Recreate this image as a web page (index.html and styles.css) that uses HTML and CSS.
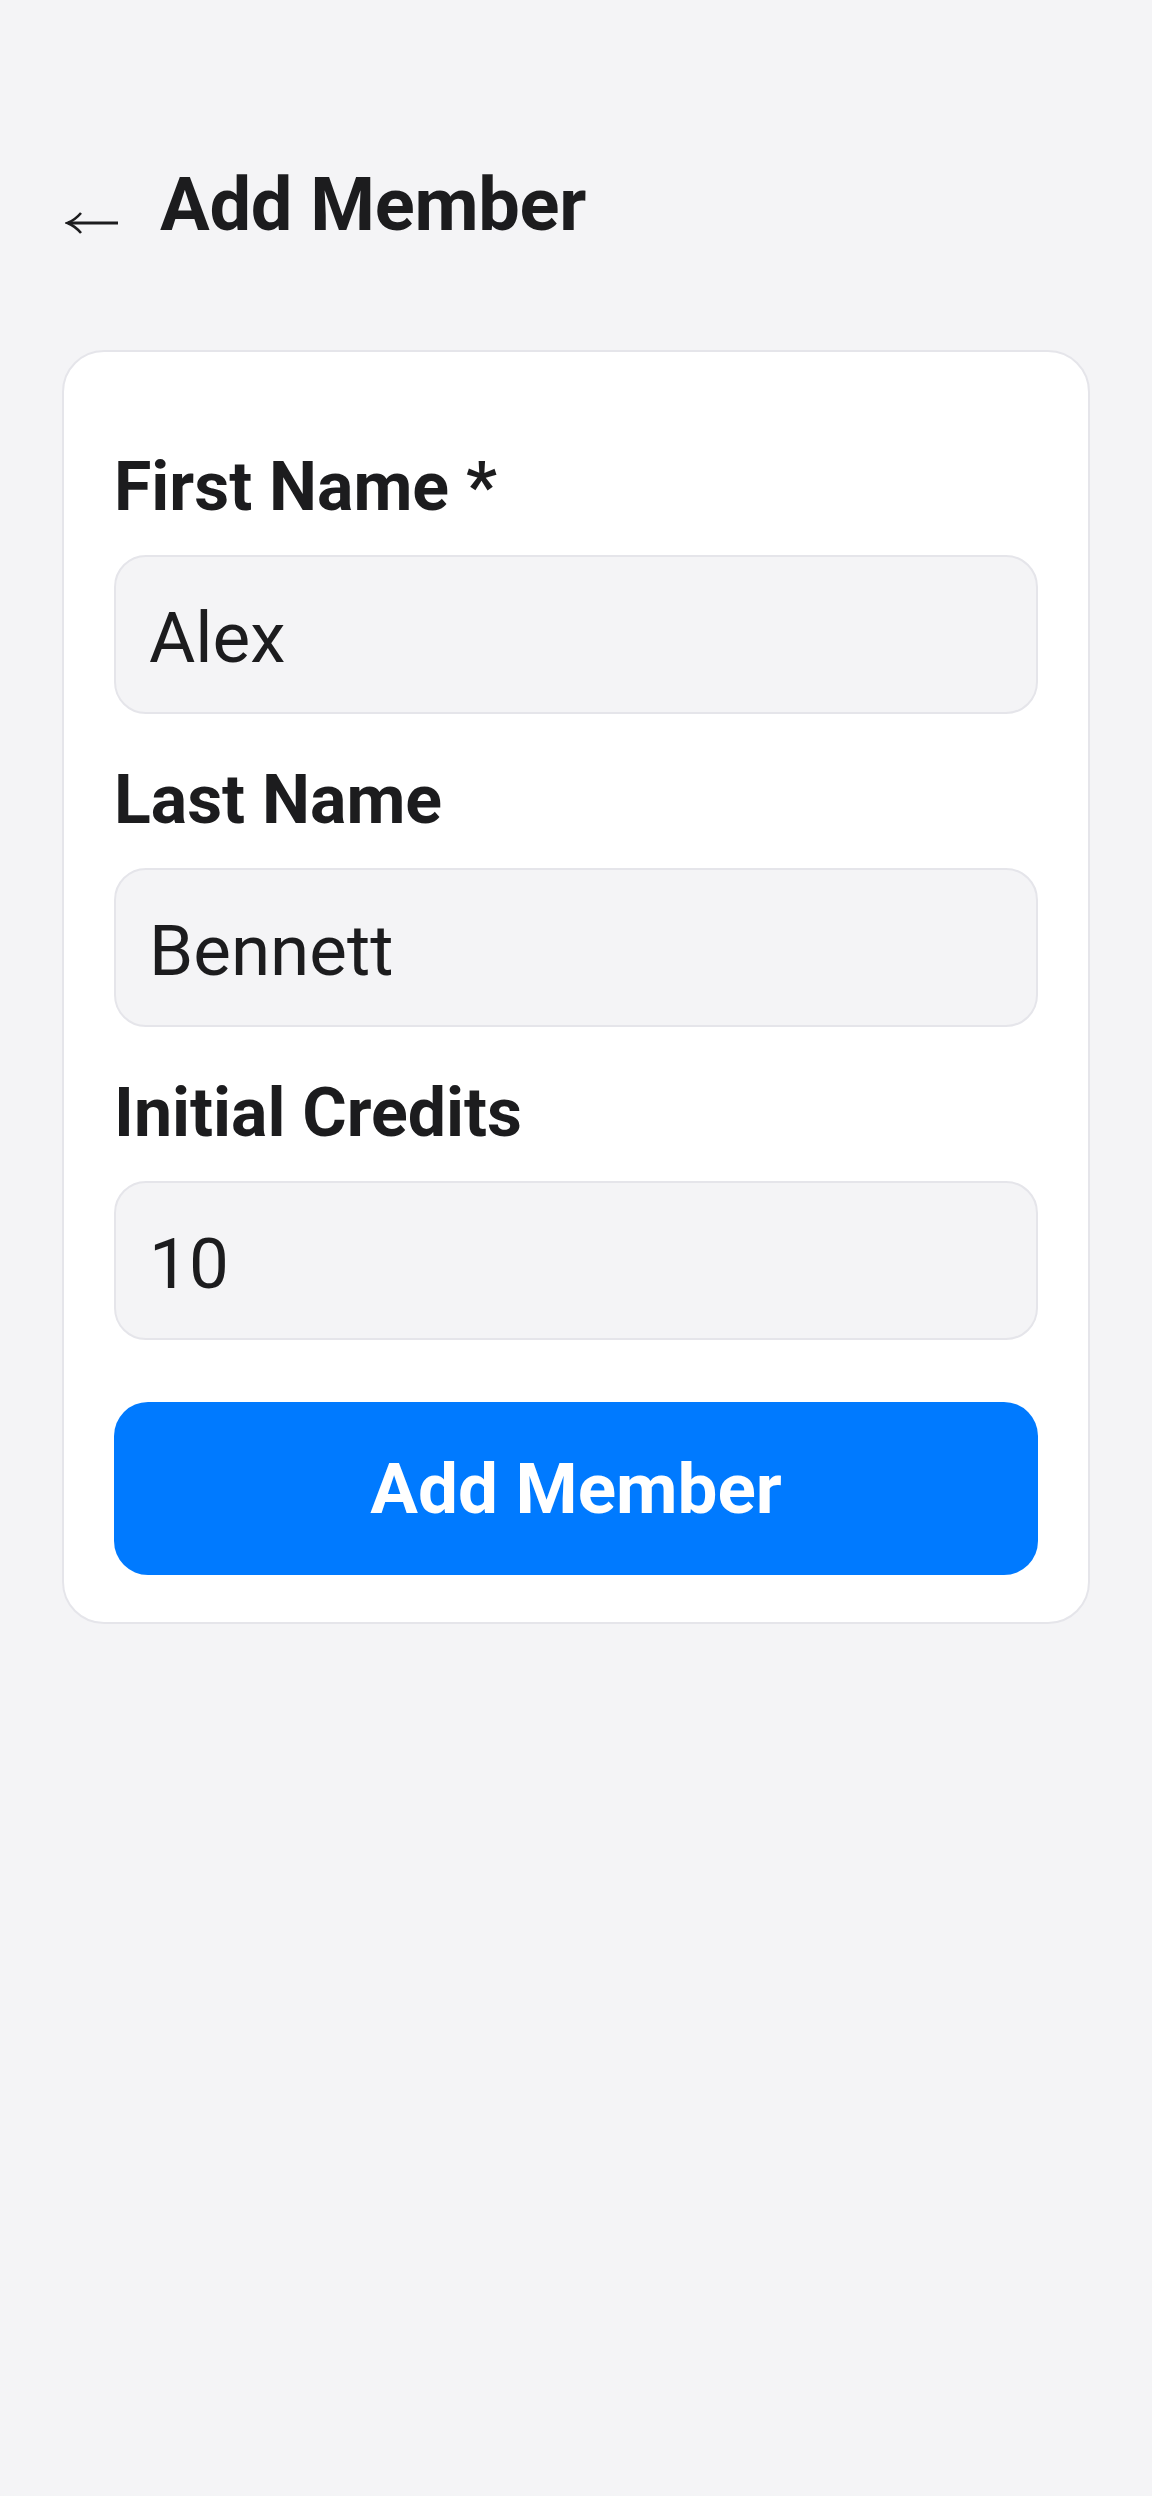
FILE: index.html
```html
<!DOCTYPE html>
<html lang="en">
<head>
    <meta charset="UTF-8">
    <meta name="viewport" content="width=device-width, initial-scale=1.0">
    <title>Add Member</title>
    <link rel="stylesheet" href="styles.css">
</head>
<body>
    <div class="page">
        <div class="header">
            <button class="back-btn" aria-label="Back">
                <svg width="54" height="24" viewBox="0 0 54 24" fill="none" stroke="#1c1c1e" stroke-width="3" stroke-linecap="butt">
                    <path d="M3 12 H53"/>
                    <path d="M16 2 Q10 9 2.5 12 Q10 15 16 22" stroke-width="2.6" stroke-linejoin="miter"/>
                </svg>
            </button>
            <h1>Add Member</h1>
        </div>

        <div class="form-card">
            <div class="field">
                <label for="firstName">First Name *</label>
                <input type="text" id="firstName" value="Alex">
            </div>
            <div class="field">
                <label for="lastName">Last Name</label>
                <input type="text" id="lastName" value="Bennett">
            </div>
            <div class="field">
                <label for="credits">Initial Credits</label>
                <input type="text" id="credits" value="10">
            </div>
            <button class="submit-btn">Add Member</button>
        </div>
    </div>
</body>
</html>
```

FILE: styles.css
```css
body {
    margin: 0;
    background-color: #f4f4f6;
    font-family: Roboto, "Noto Sans", sans-serif;
    color: #1c1c1e;
}
.page {
    padding: 160px 62px 0;
}
.header {
    display: flex;
    align-items: flex-start;
    height: 89px;
}
.back-btn {
    background: none;
    border: none;
    padding: 0;
    margin: 51px 41px 0 3px;
    width: 54px;
    height: 24px;
    display: block;
    cursor: pointer;
}
.back-btn svg {
    display: block;
}
h1 {
    margin: 0;
    font-size: 74px;
    font-weight: 700;
    line-height: 89px;
    letter-spacing: -0.3px;
}
.form-card {
    margin-top: 101px;
    background-color: #fff;
    border: 2px solid #e5e5ea;
    border-radius: 42px;
    padding: 95px 50px 47px;
}
.field {
    margin-bottom: 46px;
}
.field:last-of-type {
    margin-bottom: 62px;
}
label {
    display: block;
    font-size: 68px;
    font-weight: 700;
    line-height: 80px;
    margin-bottom: 28px;
}
input[type="text"] {
    display: block;
    box-sizing: border-box;
    width: 100%;
    height: 159px;
    padding: 6px 33px 0;
    font-family: Roboto, "Noto Sans", sans-serif;
    font-size: 71px;
    color: #1c1c1e;
    background-color: #f4f4f6;
    border: 2px solid #e5e5ea;
    border-radius: 32px;
    outline: none;
}
.submit-btn {
    display: block;
    width: 100%;
    height: 173px;
    background-color: #007aff;
    color: #fff;
    border: none;
    border-radius: 34px;
    font-family: Roboto, "Noto Sans", sans-serif;
    font-size: 71px;
    font-weight: 700;
    cursor: pointer;
}
```
